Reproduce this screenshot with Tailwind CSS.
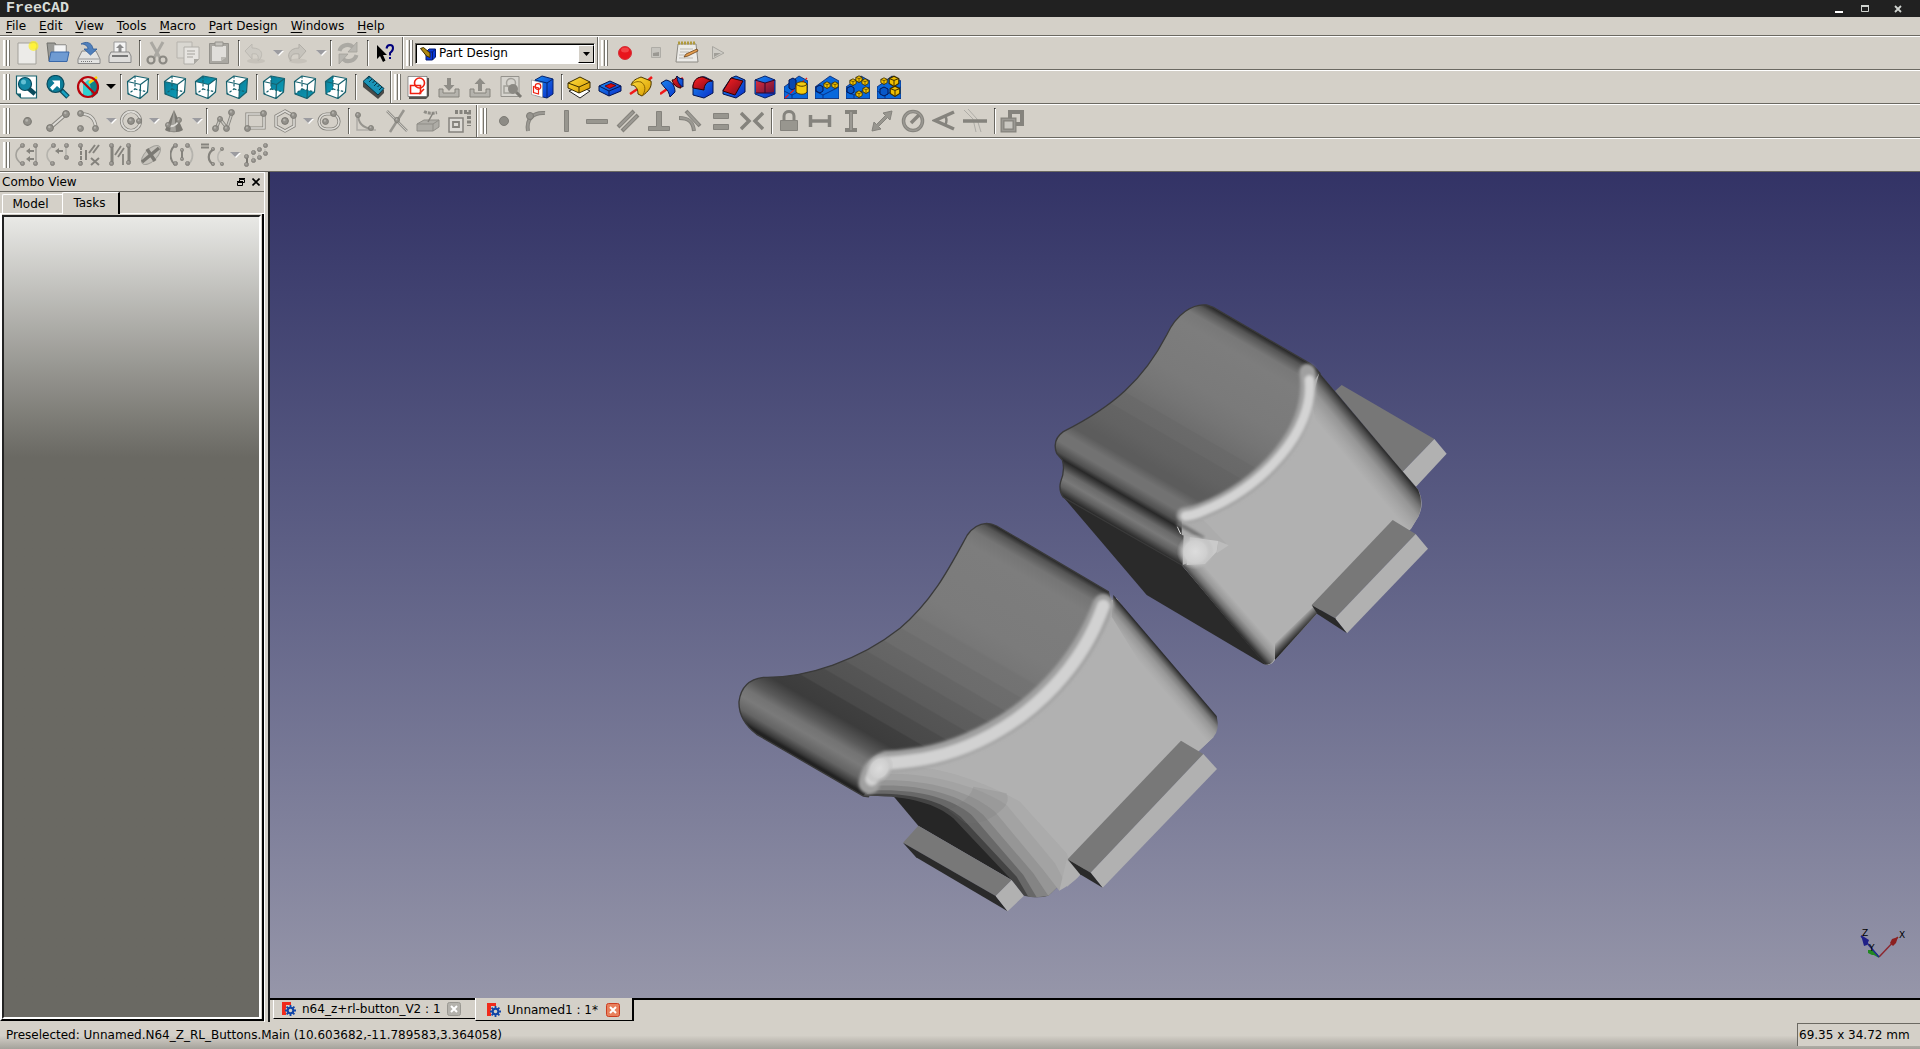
<!DOCTYPE html>
<html lang="en">
<head>
<meta charset="utf-8">
<title>FreeCAD</title>
<script src="https://cdn.jsdelivr.net/npm/@tailwindcss/browser@4"></script>
</head>
<body class="flex h-screen flex-col overflow-hidden bg-[#d4d0c8] font-['DejaVu_Sans',sans-serif] text-xs text-black">

<!-- shared icon parts -->
<svg class="absolute size-0" aria-hidden="true">
  <defs>
    <linearGradient id="teal" x1="0" y1="0" x2="1" y2="1"><stop offset="0" stop-color="#0a7d98"/><stop offset="1" stop-color="#0b9cb8"/></linearGradient>
    <linearGradient id="red" x1="0" y1="0" x2="1" y2="1"><stop offset="0" stop-color="#ff2020"/><stop offset="1" stop-color="#7c0a1c"/></linearGradient>
    <linearGradient id="blue" x1="0" y1="0" x2="1" y2="1"><stop offset="0" stop-color="#1a8cf0"/><stop offset="1" stop-color="#0a2cc8"/></linearGradient>
    <linearGradient id="gold" x1="0" y1="0" x2="1" y2="1"><stop offset="0" stop-color="#ffe040"/><stop offset="1" stop-color="#d89a00"/></linearGradient>
    <symbol id="cube-back" viewBox="0 0 24 24"><path d="M1.5 6.5L9 1l13.500 2.500L21.500 17 14 23.500 2 19z" fill="#fff"/></symbol>
    <symbol id="cube-wire" viewBox="0 0 24 24"><g fill="none" stroke="#17626f" stroke-width="1.200" stroke-linejoin="round"><path d="M1.500 6.500L9 1l13.500 2.500L21.500 17 14 23.500 2 19zM1.500 6.500L14.500 9.500l8-6M14.500 9.500L14 23.500"/><path d="M9 1v13L2 19M9 14l12.500 3" stroke-dasharray="2.500 1.500"/></g></symbol>
    <symbol id="arrow" viewBox="0 0 11 6"><path d="M1 1h10L6 6z" fill="#fff"/><path d="M0 0h10L5 5z" fill="#9c9ca0"/></symbol>
    <symbol id="dot" viewBox="0 0 8 8"><circle cx="4" cy="4" r="3.400" fill="#93918b" stroke="#7b7973"/><circle cx="3.300" cy="3" r="1.200" fill="#b5b3ad"/></symbol>
    <symbol id="gold-cube" viewBox="0 0 10 10"><path d="M1 3l4-2 4 2v4L5 9.500 1 7z" fill="#f0c000" stroke="#3a2c00"/><path d="M1 3l4 1.500L9 3M5 4.500v5" fill="none" stroke="#3a2c00" stroke-width=".8"/></symbol>
    <symbol id="blue-base" viewBox="0 0 24 24"><path d="M0 12L15 1l9 5v17.500H0z" fill="#0868dc" stroke="#06226a" stroke-width=".8"/><path d="M0 16l8 4 16-8M8 20v3.500" fill="none" stroke="#06328a"/></symbol>
    <symbol id="fc" viewBox="0 0 14 14"><path d="M0 0h9v3H4v2h3v3H4v5H0z" fill="#f02a1c"/><circle cx="8.500" cy="8.500" r="5" fill="#d4d0c8"/><circle cx="8.500" cy="8.500" r="2.800" fill="none" stroke="#1246a8" stroke-width="2"/><path d="M8.500 3v3M8.500 11v3M3 8.500h3M11 8.500h3M4.600 4.600l2 2M10.400 10.400l2 2M12.400 4.600l-2 2M6.600 10.400l-2 2" stroke="#1246a8" stroke-width="1.800"/></symbol>
  </defs>
</svg>

<header class="flex h-[17px] shrink-0 items-center justify-between bg-[#212121] pr-[18px] pl-1.5">
  <h1 class="font-['Liberation_Mono',monospace] text-[15px] leading-[17px] font-bold text-[#d8dcd8]">FreeCAD</h1>
  <div class="flex items-center gap-4">
    <button aria-label="Minimize"><svg class="h-2 w-2.5" viewBox="0 0 10 8"><path d="M1 6h8v2H1z" fill="#fff"/></svg></button>
    <button aria-label="Maximize"><svg class="h-2 w-2.5" viewBox="0 0 10 8"><path d="M1.500 1.500h7v5h-7z" fill="none" stroke="#d0d4d0" /><path d="M1 0h8v2H1z" fill="#d0d4d0"/></svg></button>
    <button aria-label="Close" class="ml-2"><svg class="size-2" viewBox="0 0 8 8"><path d="M1 1l6 6M7 1L1 7" stroke="#d0d4d0" stroke-width="1.800"/></svg></button>
  </div>
</header>

<nav class="flex h-[19px] shrink-0 items-center gap-[13px] border-b border-[#6b6962] px-1.5 leading-[18px]" aria-label="Menu bar">
  <button><u class="underline-offset-2">F</u>ile</button>
  <button><u class="underline-offset-2">E</u>dit</button>
  <button><u class="underline-offset-2">V</u>iew</button>
  <button><u class="underline-offset-2">T</u>ools</button>
  <button><u class="underline-offset-2">M</u>acro</button>
  <button><u class="underline-offset-2">P</u>art Design</button>
  <button><u class="underline-offset-2">W</u>indows</button>
  <button><u class="underline-offset-2">H</u>elp</button>
</nav>

<!-- row 1: file, workbench, macro -->
<div class="flex h-[34px] shrink-0 border-y border-t-white border-b-[#6b6962] [&_svg]:shrink-0 [&>div>button]:w-[31px] [&>div>button]:pl-[3px] [&>div>hr]:mr-px [&>div>hr]:ml-[3px] [&>div>hr]:h-[26px] [&>div>hr]:w-0.5 [&>div>hr]:border-x [&>div>hr]:border-l-[#6b6962] [&>div>hr]:border-r-white">
  <div class="flex items-center border-r border-[#6b6962] pr-px" role="toolbar" aria-label="File">
    <span class="mr-[3px] ml-[3px] h-[26px] w-1.5 border-x-2 border-l-white border-r-white shadow-[inset_-1px_0_#77756e,1px_0_#77756e]"></span>
    <button aria-label="New"><svg class="size-6" viewBox="0 0 24 24"><path d="M3 2h18v21H3z" fill="#ecebe8" stroke="#a3a19b"/><circle cx="18.500" cy="5" r="5" fill="#fff200" opacity=".6"/><circle cx="18.500" cy="5" r="3" fill="#fff33a"/></svg></button>
    <button aria-label="Open"><svg class="size-6" viewBox="0 0 24 24"><path d="M1 2h8l1 2h10v16H3z" fill="#9a9a96" stroke="#6f6f6b"/><path d="M8 4h12v8H8z" fill="#f4f4f4" stroke="#999" stroke-width=".6"/><path d="M5 11h18l-2 9.500H3z" fill="#6f9bd2" stroke="#3a68a8"/></svg></button>
    <button aria-label="Save"><svg class="size-6" viewBox="0 0 24 24"><path d="M5 10h14l4 8v4.500H1V18z" fill="#e4e4e2" stroke="#888"/><path d="M1.500 18h21" stroke="#999"/><path d="M4 20.500h12" stroke="#777" stroke-dasharray="1 1"/><path d="M4 3C9 0 15 1 16 8h4l-6.500 6L7 8h4C11 5 8 3 4 3z" fill="#5080bc" stroke="#2c5a98" stroke-width=".8"/></svg></button>
    <button aria-label="Print"><svg class="size-6" viewBox="0 0 24 24"><path d="M6 1h12v12H6z" fill="#f4f4f4" stroke="#999"/><path d="M12 3l4 4h-2.500v4h-3V7H8z" fill="#8a8a8a"/><path d="M3 11h18l2 4v6.500H1V15z" fill="#dedddb" stroke="#888"/><path d="M4 14h16v2H4z" fill="#777"/></svg></button>
    <hr>
    <button aria-label="Cut"><svg class="size-6" viewBox="0 0 24 24"><path d="M6 1l9 16M18 1L9 17" stroke="#aaa8a2" stroke-width="3"/><circle cx="6" cy="19" r="3.500" fill="none" stroke="#8b8983" stroke-width="2.200"/><circle cx="18" cy="19" r="3.500" fill="none" stroke="#8b8983" stroke-width="2.200"/></svg></button>
    <button aria-label="Copy"><svg class="size-6" viewBox="0 0 24 24"><path d="M1 1h15v16H1z" fill="#d9d7d1" stroke="#b6b3ad"/><path d="M8 6h15v12l-5 5H8z" fill="#e6e4e0" stroke="#b0aea8"/><path d="M11 10h8M11 13h8M11 16h6" stroke="#bab8b2" stroke-width="1.500"/><path d="M23 18h-5v5z" fill="#aaa8a2"/></svg></button>
    <button aria-label="Paste"><svg class="size-6" viewBox="0 0 24 24"><path d="M2.500 2.500h19v20h-19z" fill="#a9a7a1" stroke="#94928c"/><path d="M5 5h14v11l-5 4H5z" fill="#e0deda"/><path d="M19 16h-5v4z" fill="#bab8b2"/><path d="M8 1h8v4H8z" fill="#c4c2bc" stroke="#94928c"/></svg></button>
    <hr>
    <div class="flex w-[43px] items-center pl-0.5"><button aria-label="Undo"><svg class="size-6" viewBox="0 0 24 24"><ellipse cx="13" cy="20" rx="9" ry="2.500" fill="#c6c2ba"/><path d="M9 3v4c11 0 12 8 6 13 1-6-1-8-6-7v5L2 10z" fill="#cdcac3" stroke="#bcb9b2"/></svg></button><button class="ml-1.5" aria-label="Undo list"><svg class="h-1.5 w-[11px]"><use href="#arrow"/></svg></button></div>
    <div class="flex w-[43px] items-center pl-0.5"><button aria-label="Redo"><svg class="size-6" viewBox="0 0 24 24"><ellipse cx="12" cy="20" rx="9" ry="2.500" fill="#c6c2ba"/><path d="M13 3v4C3 7 0 15 5 20c-1-6 2-8 8-7v5l7-8z" fill="#c6c3bc" stroke="#b2afa8"/></svg></button><button class="ml-1.5" aria-label="Redo list"><svg class="h-1.5 w-[11px]"><use href="#arrow"/></svg></button></div>
    <hr>
    <button aria-label="Refresh"><svg class="size-6" viewBox="0 0 24 24"><path d="M3.500 10C5 4 13 2 17 6M20.500 14c-1.500 6-9.500 8-13.500 4" fill="none" stroke="#aba9a3" stroke-width="4"/><path d="M21 1v10h-9zM3 23V13h9z" fill="#b8b6b0" stroke="#a3a19b" stroke-width=".8"/></svg></button>
    <hr>
    <button aria-label="What's This?"><svg class="size-6" viewBox="0 0 24 24"><path d="M4 4v14l3-3 3 6 2.500-1.500L10 14h4z" fill="#000"/><path d="M13.500 7.500Q14 4 17 4t3 3-3 5v2.500" fill="none" stroke="#00007c" stroke-width="2"/><path d="M16 16h2v2h-2z" fill="#00007c"/></svg></button>
  </div>
  <div class="flex items-center border-x border-l-white border-r-[#6b6962] pr-0.5" role="toolbar" aria-label="Workbench">
    <span class="mr-[3px] ml-0.5 h-[26px] w-1.5 border-x-2 border-l-white border-r-white shadow-[inset_-1px_0_#77756e,1px_0_#77756e]"></span>
    <div class="relative h-[21px] w-[180px] border border-[#6b6962] border-r-white border-b-white bg-white">
      <select aria-label="Workbench" class="block size-full appearance-none border-t border-l border-black pl-[22px] leading-[17px]"><option>Part Design</option></select>
      <svg class="pointer-events-none absolute top-[3px] left-1 h-3.5 w-4" viewBox="0 0 16 14"><path d="M6 5l3-3h6.500v8l-3 3H6z" fill="#0838d8" stroke="#041a70"/><path d="M6 5h6.500v8M12.500 5l3-3" fill="none" stroke="#041a70"/><path d="M.5 1.500l3-1L10 6v4.500L6.500 9z" fill="#b08a10" stroke="#3c2e00"/></svg>
      <span class="pointer-events-none absolute top-px right-0 flex h-[18px] w-4 items-center justify-center border border-white border-r-black border-b-black bg-[#d4d0c8]"><svg class="h-1 w-[7px]" viewBox="0 0 7 4"><path d="M0 0h7L3.500 4z"/></svg></span>
    </div>
  </div>
  <div class="flex flex-1 items-center border-l border-white" role="toolbar" aria-label="Macro">
    <span class="mr-[3px] ml-0.5 h-[26px] w-1.5 border-x-2 border-l-white border-r-white shadow-[inset_-1px_0_#77756e,1px_0_#77756e]"></span>
    <button aria-label="Record macro"><svg class="size-6" viewBox="0 0 24 24"><circle cx="12" cy="12" r="6.500" fill="#e8141c" stroke="#d43038"/><ellipse cx="12" cy="9" rx="4" ry="2.500" fill="#f86060" opacity=".6"/></svg></button>
    <button aria-label="Stop macro"><svg class="size-6" viewBox="0 0 24 24"><path d="M7.500 6.500h9v10h-9z" fill="#c6c4be" stroke="#aeaca6"/><path d="M9 12l6-1v4H9z" fill="#9a9892"/></svg></button>
    <button aria-label="Edit macros"><svg class="size-6" viewBox="0 0 24 24"><path d="M3 3h18l2 18H1z" fill="#ecebe8" stroke="#8c8a84"/><path d="M3 2h18" stroke="#b09a3c" stroke-width="3" stroke-dasharray="2 1"/><path d="M5 8h13M5 11h9M4 14h6M4 17h14" stroke="#bbb9b3"/><path d="M9 16l2-3 11-5 1 2-10 5z" fill="#e8a050" stroke="#6a4018" stroke-width=".8"/></svg></button>
    <button aria-label="Execute macro"><svg class="size-6" viewBox="0 0 24 24"><path d="M6.500 5.500v12.500L18 12z" fill="#cfcdc7" stroke="#a8a6a0"/><path d="M8 12h7l-7 4z" fill="#a19f99"/></svg></button>
  </div>
</div>

<!-- row 2: view, part design -->
<div class="flex h-[34px] shrink-0 border-y border-t-white border-b-[#6b6962] [&_svg]:shrink-0 [&>div>button]:w-[31px] [&>div>button]:pl-[3px] [&>div>hr]:mr-px [&>div>hr]:ml-[3px] [&>div>hr]:h-[26px] [&>div>hr]:w-0.5 [&>div>hr]:border-x [&>div>hr]:border-l-[#6b6962] [&>div>hr]:border-r-white">
  <div class="flex items-center border-r border-[#6b6962] pr-px" role="toolbar" aria-label="View">
    <span class="mr-[3px] ml-[3px] h-[26px] w-1.5 border-x-2 border-l-white border-r-white shadow-[inset_-1px_0_#77756e,1px_0_#77756e]"></span>
    <button aria-label="Fit all"><svg class="size-6" viewBox="0 0 24 24"><path d="M1.500 1h20v22H6l-4.500-4.500z" fill="#fff" stroke="#17626f" stroke-width="1.200"/><path d="M1.500 18.500H6V23z" fill="#17626f"/><path d="M13 13l7 6" stroke="#0a4a5c" stroke-width="4.500"/><circle cx="10" cy="9" r="6.500" fill="#1389a6" stroke="#0a4a5c" stroke-width="1.200"/><circle cx="8.500" cy="7" r="2.500" fill="#63c0d4"/></svg></button>
    <button aria-label="Fit selection"><svg class="size-6" viewBox="0 0 24 24"><path d="M14 14l8 8" stroke="#0a4a5c" stroke-width="5"/><path d="M16 16l5.500 5.500" stroke="#18a0c0" stroke-width="2.500"/><circle cx="9.500" cy="9" r="8.500" fill="#0c7d99" stroke="#0a4a5c" stroke-width="1.200"/><path d="M4 12.500l4.500-4.500L6 5.500h8v8L11 11l-4.500 4.500z" fill="#fff"/></svg></button>
    <div class="flex w-[43px] items-center pl-0.5"><button aria-label="Draw style"><svg class="size-6" viewBox="0 0 24 24"><path d="M7 9l5-4 7 2v12l-5 3-7-2z" fill="#30d0d0"/><path d="M14 9l7-5 1 14-6 5z" fill="#108088"/><path d="M13 8l8-6" stroke="#ffd400" stroke-width="2.500"/><circle cx="12" cy="12" r="10" fill="none" stroke="#b8040c" stroke-width="2.200"/><path d="M5 5l14 14" stroke="#b8040c" stroke-width="2.200"/></svg></button><button class="ml-1.5" aria-label="Draw style list"><svg class="h-1.5 w-[11px]" viewBox="0 0 11 6"><path d="M0 0h10L5 5z"/></svg></button></div>
    <hr>
    <button aria-label="Axonometric"><svg class="size-6" viewBox="0 0 24 24"><use href="#cube-back"/><use href="#cube-wire"/></svg></button>
    <hr>
    <button aria-label="Front"><svg class="size-6" viewBox="0 0 24 24"><use href="#cube-back"/><path d="M1.500 6.500l13 3-.5 14-12-4.500z" fill="url(#teal)"/><use href="#cube-wire"/></svg></button>
    <button aria-label="Top"><svg class="size-6" viewBox="0 0 24 24"><use href="#cube-back"/><path d="M1.500 6.500L9 1l13.500 2.500-8 6z" fill="url(#teal)"/><use href="#cube-wire"/></svg></button>
    <button aria-label="Right"><svg class="size-6" viewBox="0 0 24 24"><use href="#cube-back"/><path d="M14.500 9.500l8-6-1 13.500-7.500 6.500z" fill="url(#teal)"/><use href="#cube-wire"/></svg></button>
    <hr>
    <button aria-label="Rear"><svg class="size-6" viewBox="0 0 24 24"><use href="#cube-back"/><path d="M9 1l13.500 2.500-1 13.500L9 14z" fill="url(#teal)"/><use href="#cube-wire"/></svg></button>
    <button aria-label="Bottom"><svg class="size-6" viewBox="0 0 24 24"><use href="#cube-back"/><path d="M2 19l7-5 12.500 3-7.500 6.500z" fill="url(#teal)"/><use href="#cube-wire"/></svg></button>
    <button aria-label="Left"><svg class="size-6" viewBox="0 0 24 24"><use href="#cube-back"/><path d="M1.500 6.500L9 1v13l-7 5z" fill="url(#teal)"/><use href="#cube-wire"/></svg></button>
    <hr>
    <button aria-label="Measure distance"><svg class="size-6" viewBox="0 0 24 24"><path d="M2 7v5l15 12 6-6v-3z" fill="#4a4a48"/><path d="M2 6.500L8 1l15 12.500-6 6.500z" fill="#1a94b8" stroke="#063848"/><path d="M8.500 2l-2 2M11 4l-3 3M13.500 6l-2 2M16 8l-3 3M18.500 10l-2 2M21 12l-3 3" stroke="#053444"/></svg></button>
  </div>
  <div class="flex flex-1 items-center border-l border-white" role="toolbar" aria-label="Part Design">
    <span class="mr-[3px] ml-0.5 h-[26px] w-1.5 border-x-2 border-l-white border-r-white shadow-[inset_-1px_0_#77756e,1px_0_#77756e]"></span>
    <button aria-label="Create sketch"><svg class="size-6" viewBox="0 0 24 24"><path d="M3 3h20v18l-3 3H3z" fill="#55534e"/><path d="M2 1.500h19v20H2z" fill="#fff" stroke="#555" stroke-width=".6"/><g fill="none" stroke="#f02010" stroke-width="1.600"><path d="M4.500 10.500h10v8h-10z"/><circle cx="13.500" cy="8" r="5"/><path d="M13 19l5-5"/></g></svg></button>
    <button aria-label="Leave sketch"><svg class="size-6" viewBox="0 0 24 24"><path d="M2 14v8h20v-8h-4v4H6v-4z" fill="#b5b3ad" stroke="#85837d"/><path d="M10 3h4v7h3.500L12 16l-5.500-6H10z" fill="#8f8d87"/></svg></button>
    <button aria-label="Map sketch"><svg class="size-6" viewBox="0 0 24 24"><path d="M2 14v8h20v-8h-4v4H6v-4z" fill="#b5b3ad" stroke="#85837d"/><path d="M10 16h4V9h3.500L12 3 6.500 9H10z" fill="#8f8d87"/></svg></button>
    <button aria-label="View sketch"><svg class="size-6" viewBox="0 0 24 24"><path d="M2 1.500h18v20H2z" fill="#d6d4ce" stroke="#94928c"/><g fill="none" stroke="#a3a19b" stroke-width="1.500"><path d="M5 11h9v7H5z"/><circle cx="12" cy="8" r="4.500"/></g><path d="M17 17l5 5" stroke="#7c7a74" stroke-width="3"/><circle cx="14" cy="14" r="5" fill="#8b8983"/></svg></button>
    <button aria-label="Sketch on face"><svg class="size-6" viewBox="0 0 24 24"><path d="M5 5l7-4 11 3v15l-6 4-12-3z" fill="url(#blue)" stroke="#06226a"/><path d="M5 5l12 3 6-4M17 8v15" fill="none" stroke="#06226a"/><path d="M1.500 5l11 3v14.500l-11-3z" fill="#fff" stroke="#888" stroke-width=".6"/><g fill="none" stroke="#f02010" stroke-width="1.200"><path d="M3.500 11.500l5 1.500v6l-5-1.500z"/><circle cx="8" cy="11.500" r="2.800"/></g></svg></button>
    <hr>
    <button aria-label="Pad"><svg class="size-6" viewBox="0 0 24 24"><path d="M2 16l11-5 10 5-10 7z" fill="#fff" stroke="#222"/><path d="M1 8l12-6 10 5v6l-11 5L1 13z" fill="url(#gold)" stroke="#3a2c00"/><path d="M1 8l11 4 11-5M12 12v6" fill="none" stroke="#3a2c00"/></svg></button>
    <button aria-label="Pocket"><svg class="size-6" viewBox="0 0 24 24"><path d="M1 11l11-5 11 5v5l-12 5L1 16z" fill="url(#blue)" stroke="#041450"/><path d="M1 11l10 5 12-5M11 16v5" fill="none" stroke="#041450"/><path d="M7 11l6-2.500 5 2-6.500 3z" fill="#d80c14" stroke="#50040c" stroke-width=".8"/></svg></button>
    <button aria-label="Revolution"><svg class="size-6" viewBox="0 0 24 24"><path d="M1 19l9-6M16 8l7-6" stroke="#f01818" stroke-width="2.500"/><path d="M2 10C4 5 7 4 12 2l10 4c1 6-2 10-9 15l-4-2c0-6-3-9-7-9z" fill="url(#gold)" stroke="#4a3600"/><path d="M12 7c5 3 5 9 1 14M2 10c3-3 6-4 10-3" fill="none" stroke="#8a6400"/></svg></button>
    <button aria-label="Groove"><svg class="size-6" viewBox="0 0 24 24"><path d="M0 19L23 3" stroke="#f01818" stroke-width="2.500"/><path d="M12 5c2 6 6 8 9 8l1-9c-3 0-4-2-5-3-1 3-3 4-5 4z" fill="url(#red)" stroke="#300"/><path d="M17 1c0 5 2 9 6 11V4c-3 0-4-1-6-3zM1 8l5-3c6 1 9 6 9 12l-5 5c-1-4-2-7-5-9z" fill="url(#blue)" stroke="#041450"/></svg></button>
    <button aria-label="Fillet"><svg class="size-6" viewBox="0 0 24 24"><path d="M2 11C3 4 9 1 14 2l8 4v12l-9 5-11-3z" fill="url(#blue)" stroke="#041450"/><path d="M2 11C3 4 7 2 12 2l9 4c-5 0-8 4-8 9L2 13z" fill="url(#red)" stroke="#300"/></svg></button>
    <button aria-label="Chamfer"><svg class="size-6" viewBox="0 0 24 24"><path d="M1 15L9 3l5-2 9 4v12l-9 6-13-4z" fill="url(#blue)" stroke="#041450"/><path d="M1 16L9 3l12 3-8 14z" fill="url(#red)" stroke="#300"/></svg></button>
    <button aria-label="Draft"><svg class="size-6" viewBox="0 0 24 24"><path d="M2 5l10-4 10 4v14l-10 4-10-4z" fill="url(#blue)" stroke="#06226a"/><path d="M3 6l9 2 9-3v12l-9 1-9 0z" fill="url(#red)" opacity=".85"/><path d="M2 5l10 3 10-3M12 8v10M3 18h18" fill="none" stroke="#31062a"/></svg></button>
    <button aria-label="Mirrored"><svg class="size-6" viewBox="0 0 24 24"><use href="#blue-base"/><path d="M5 5l4-2 3 2v8l-4 2-3-2z" fill="#0848b0" stroke="#041450"/><path d="M1 23L23 3" stroke="#f01818" stroke-width="1.300" stroke-dasharray="5 2"/><path d="M12 9v8c3 3 9 3 11 0V9c-2-3-8-3-11 0z" fill="#f4cc10" stroke="#4a3600"/><path d="M12 9c3 3 9 3 11 0" fill="none" stroke="#4a3600"/></svg></button>
    <button aria-label="Linear pattern"><svg class="size-6" viewBox="0 0 24 24"><use href="#blue-base"/><path d="M1 12l4-2 3 2v4l-3 2-4-2z" fill="#0858c8" stroke="#041450"/><use href="#gold-cube" x="8" y="6" width="8" height="8"/><use href="#gold-cube" x="16" y="6" width="8" height="8"/></svg></button>
    <button aria-label="Polar pattern"><svg class="size-6" viewBox="0 0 24 24"><use href="#blue-base"/><path d="M1 13l4-2 3 2v4l-3 2-4-2z" fill="#0858c8" stroke="#041450"/><use href="#gold-cube" x="3" y="3" width="8" height="8"/><use href="#gold-cube" x="9" y="0" width="8" height="8"/><use href="#gold-cube" x="15" y="3" width="8" height="8"/><use href="#gold-cube" x="16" y="11" width="8" height="8"/><use href="#gold-cube" x="9" y="15" width="8" height="8"/></svg></button>
    <button aria-label="MultiTransform"><svg class="size-6" viewBox="0 0 24 24"><use href="#blue-base"/><path d="M3 14l4-2 4 2v5l-4 2-4-2z" fill="#0858c8" stroke="#041450"/><use href="#gold-cube" x="3" y="2" width="8" height="8"/><use href="#gold-cube" x="10" y="0" width="14" height="12"/><use href="#gold-cube" x="12" y="10" width="12" height="12"/></svg></button>
  </div>
</div>

<!-- row 3: sketcher geometry, constraints -->
<div class="flex h-[34px] shrink-0 border-y border-t-white border-b-[#6b6962] [&_svg]:shrink-0 [&>div>button]:w-[31px] [&>div>button]:pl-[3px] [&>div>hr]:mr-px [&>div>hr]:ml-[3px] [&>div>hr]:h-[26px] [&>div>hr]:w-0.5 [&>div>hr]:border-x [&>div>hr]:border-l-[#6b6962] [&>div>hr]:border-r-white">
  <div class="flex items-center border-r border-[#6b6962] pr-px" role="toolbar" aria-label="Sketcher geometries">
    <span class="mr-[3px] ml-[3px] h-[26px] w-1.5 border-x-2 border-l-white border-r-white shadow-[inset_-1px_0_#77756e,1px_0_#77756e]"></span>
    <button aria-label="Point"><svg class="size-6" viewBox="0 0 24 24"><use href="#dot" x="8" y="8" width="9" height="9"/></svg></button>
    <button aria-label="Line"><svg class="size-6" viewBox="0 0 24 24"><path d="M4 19L20 5" stroke="#85837d" stroke-width="4"/><path d="M4 19L20 5" stroke="#dddbd6" stroke-width="2"/><use href="#dot" x="0" y="15" width="8" height="8"/><use href="#dot" x="16" y="1" width="8" height="8"/></svg></button>
    <div class="flex w-[43px] items-center pl-0.5"><button aria-label="Arc"><svg class="size-6" viewBox="0 0 24 24"><path d="M6 5c8 0 13 5 14 14" fill="none" stroke="#85837d" stroke-width="3.500"/><path d="M6 5c8 0 13 5 14 14" fill="none" stroke="#dddbd6" stroke-width="2"/><use href="#dot" x="1" y="1" width="7" height="7"/><use href="#dot" x="1" y="16" width="7" height="7"/><use href="#dot" x="16" y="16" width="7" height="7"/></svg></button><button class="ml-1.5" aria-label="Arc list"><svg class="h-1.5 w-[11px]"><use href="#arrow"/></svg></button></div>
    <div class="flex w-[43px] items-center pl-0.5"><button aria-label="Circle"><svg class="size-6" viewBox="0 0 24 24"><circle cx="12" cy="12" r="9.500" fill="none" stroke="#85837d" stroke-width="3.200"/><circle cx="12" cy="12" r="9.500" fill="none" stroke="#dddbd6" stroke-width="1.800"/><use href="#dot" x="8" y="8" width="8" height="8"/><use href="#dot" x="17" y="9" width="6" height="6"/></svg></button><button class="ml-1.5" aria-label="Circle list"><svg class="h-1.5 w-[11px]"><use href="#arrow"/></svg></button></div>
    <div class="flex w-[43px] items-center pl-0.5"><button aria-label="Conic"><svg class="size-6" viewBox="0 0 24 24"><path d="M12 1l9 20c-4 3-14 3-18 0z" fill="#7b7973"/><path d="M12 1l2 21.500H8z" fill="#a5a39d"/><path d="M6 17c5 1 9-1 11-6" fill="none" stroke="#dddbd6" stroke-width="1.800"/><use href="#dot" x="3" y="13" width="6" height="6"/><use href="#dot" x="14" y="8" width="6" height="6"/></svg></button><button class="ml-1.5" aria-label="Conic list"><svg class="h-1.5 w-[11px]"><use href="#arrow"/></svg></button></div>
    <hr>
    <button aria-label="Polyline"><svg class="size-6" viewBox="0 0 24 24"><path d="M4 20L8 10l7 9 5-15" fill="none" stroke="#85837d" stroke-width="3.200"/><path d="M4 20L8 10l7 9 5-15" fill="none" stroke="#c9c7c1" stroke-width="1.500"/><use href="#dot" x="0" y="16" width="7" height="7"/><use href="#dot" x="5" y="7" width="6" height="6"/><use href="#dot" x="11" y="16" width="7" height="7"/><use href="#dot" x="16" y="0" width="7" height="7"/></svg></button>
    <button aria-label="Rectangle"><svg class="size-6" viewBox="0 0 24 24"><path d="M4 5h17v14H4z" fill="none" stroke="#85837d" stroke-width="3.200"/><path d="M4 5h17v14H4z" fill="none" stroke="#dddbd6" stroke-width="1.600"/><use href="#dot" x="1" y="16" width="7" height="7"/><use href="#dot" x="17" y="1" width="7" height="7"/></svg></button>
    <div class="flex w-[43px] items-center pl-0.5"><button aria-label="Polygon"><svg class="size-6" viewBox="0 0 24 24"><path d="M12 2l9 5v10l-9 5-9-5V7z" fill="none" stroke="#85837d" stroke-width="3.200"/><path d="M12 2l9 5v10l-9 5-9-5V7z" fill="none" stroke="#dddbd6" stroke-width="1.600"/><use href="#dot" x="8" y="8" width="8" height="8"/><use href="#dot" x="17" y="3" width="7" height="7"/></svg></button><button class="ml-1.5" aria-label="Polygon list"><svg class="h-1.5 w-[11px]"><use href="#arrow"/></svg></button></div>
    <button aria-label="Slot"><svg class="size-6" viewBox="0 0 24 24"><rect x="2" y="5" width="20" height="15" rx="7.500" fill="none" stroke="#85837d" stroke-width="3.200"/><rect x="2" y="5" width="20" height="15" rx="7.500" fill="none" stroke="#dddbd6" stroke-width="1.600"/><use href="#dot" x="5" y="9" width="7" height="7"/><use href="#dot" x="13" y="1" width="7" height="7"/></svg></button>
    <hr>
    <button aria-label="Sketch fillet"><svg class="size-6" viewBox="0 0 24 24"><path d="M3 3v18h19" fill="none" stroke="#aeaca6" stroke-width="1.500"/><path d="M4 5c0 9 5 14 14 15" fill="none" stroke="#97958f" stroke-width="2"/><use href="#dot" x="1" y="3" width="6" height="6"/><use href="#dot" x="14" y="16" width="6" height="6"/></svg></button>
    <button aria-label="Trim edge"><svg class="size-6" viewBox="0 0 24 24"><path d="M2 2l20 20M19 1L5 23" stroke="#97958f" stroke-width="2.500"/><path d="M2 2l20 20" stroke="#c9c7c1"/><use href="#dot" x="9" y="8" width="6" height="6"/></svg></button>
    <button aria-label="External geometry"><svg class="size-6" viewBox="0 0 24 24"><path d="M1 15l7-4h15v7l-6 4H1z" fill="#aeaca6" stroke="#8f8d87"/><path d="M1 15h16l6-4M17 15v7" fill="none" stroke="#8f8d87"/><path d="M8 2.500c4 2 8 2 13 1" fill="none" stroke="#8f8d87" stroke-width="3" stroke-dasharray="3 1"/><path d="M12 13l5-9" stroke="#85837d" stroke-width="1.500"/></svg></button>
    <button aria-label="Construction mode"><svg class="size-6" viewBox="0 0 24 24"><path d="M8 3h14v14" fill="none" stroke="#85837d" stroke-width="4" stroke-dasharray="3 1.500"/><path d="M2 9h14v14H2z" fill="#dddbd6" stroke="#85837d" stroke-width="1.500"/><path d="M6 13h6v5H6z" fill="none" stroke="#85837d" stroke-width="1.800"/></svg></button>
  </div>
  <div class="flex flex-1 items-center border-l border-white" role="toolbar" aria-label="Sketcher constraints">
    <span class="mr-[3px] ml-0.5 h-[26px] w-1.5 border-x-2 border-l-white border-r-white shadow-[inset_-1px_0_#77756e,1px_0_#77756e]"></span>
    <button aria-label="Coincident"><svg class="size-6" viewBox="0 0 24 24"><circle cx="12" cy="12" r="4.500" fill="#8d8b85" stroke="#7d7b75"/></svg></button>
    <button aria-label="Point on object"><svg class="size-6" viewBox="0 0 24 24"><path d="M5 22C3 10 10 3 22 4" fill="none" stroke="#85837d" stroke-width="4"/><path d="M5 22C3 10 10 3 22 4" fill="none" stroke="#9b9993" stroke-width="2"/><circle cx="7" cy="7" r="3.500" fill="#96948e" stroke="#7d7b75"/></svg></button>
    <button aria-label="Vertical"><svg class="size-6" viewBox="0 0 24 24"><path d="M10.500 1.500h4v21h-4z" fill="#98968f" stroke="#85837d"/></svg></button>
    <button aria-label="Horizontal"><svg class="size-6" viewBox="0 0 24 24"><path d="M1.500 10.500h21v4h-21z" fill="#98968f" stroke="#85837d"/></svg></button>
    <button aria-label="Parallel"><svg class="size-6" viewBox="0 0 24 24"><path d="M2 18L18 2M6 22L22 6" stroke="#85837d" stroke-width="4"/><path d="M3 17L17 3M7 21L21 7" stroke="#9b9993" stroke-width="2"/></svg></button>
    <button aria-label="Perpendicular"><svg class="size-6" viewBox="0 0 24 24"><path d="M9.500 2.500h5v15h8v4h-21v-4h8z" fill="#98968f" stroke="#85837d"/></svg></button>
    <button aria-label="Tangent"><svg class="size-6" viewBox="0 0 24 24"><path d="M8 2l14 15M1 9c9 0 14 3 15 13" fill="none" stroke="#85837d" stroke-width="4"/><path d="M9 3l12 13M2 9c8 0 13 3 14 12" fill="none" stroke="#9b9993" stroke-width="2"/></svg></button>
    <button aria-label="Equal"><svg class="size-6" viewBox="0 0 24 24"><path d="M4.500 4.500h15v5h-15zM4.500 15.500h15v5h-15z" fill="#98968f" stroke="#85837d"/></svg></button>
    <button aria-label="Symmetric"><svg class="size-6" viewBox="0 0 24 24"><path d="M1 4l8 8-8 8M23 4l-8 8 8 8" fill="none" stroke="#85837d" stroke-width="3.500"/></svg></button>
    <hr>
    <button aria-label="Lock"><svg class="size-6" viewBox="0 0 24 24"><path d="M7 12V7c0-6 10-6 10 0v5" fill="none" stroke="#85837d" stroke-width="3"/><path d="M3.500 11.500h17v10h-17z" fill="#98968f" stroke="#85837d"/></svg></button>
    <button aria-label="Horizontal distance"><svg class="size-6" viewBox="0 0 24 24"><path d="M2.500 6v12M21.500 6v12M2 12h20" stroke="#85837d" stroke-width="3.500"/></svg></button>
    <button aria-label="Vertical distance"><svg class="size-6" viewBox="0 0 24 24"><path d="M6 3h12M6 21h12M12 3v18" stroke="#85837d" stroke-width="4"/><path d="M12 3v18" stroke="#9b9993" stroke-width="2"/></svg></button>
    <button aria-label="Length"><svg class="size-6" viewBox="0 0 24 24"><path d="M22 2l-2 9-2.500-2.500-9 9L11 20l-9 2 2-9 2.500 2.500 9-9L13 4z" fill="#98968f" stroke="#85837d"/></svg></button>
    <button aria-label="Radius"><svg class="size-6" viewBox="0 0 24 24"><circle cx="12" cy="12" r="9.500" fill="none" stroke="#85837d" stroke-width="3.500"/><circle cx="12" cy="12" r="9.500" fill="none" stroke="#9b9993" stroke-width="1.500"/><path d="M10 14l8-8" stroke="#85837d" stroke-width="3.500"/></svg></button>
    <button aria-label="Angle"><svg class="size-6" viewBox="0 0 24 24"><path d="M22 3L3 11.500 22 20" fill="none" stroke="#85837d" stroke-width="3.500"/><path d="M13 7c2 3 2 6 0 9" fill="none" stroke="#85837d" stroke-width="2.500"/></svg></button>
    <button aria-label="Snell's law"><svg class="size-6" viewBox="0 0 24 24"><path d="M1 1l9 9 3 13M5 0l9 10 4 13" fill="none" stroke="#aeaca6"/><path d="M0 12h24" stroke="#85837d" stroke-width="3.500"/></svg></button>
    <hr>
    <button aria-label="Toggle driving"><svg class="size-6" viewBox="0 0 24 24"><path d="M10 3h12v12H10z" fill="none" stroke="#85837d" stroke-width="4"/><path d="M2.500 10.500h12v11h-12z" fill="#c9c7c1" stroke="#85837d" stroke-width="4"/><path d="M2.500 10.500h12v11h-12z" fill="none" stroke="#9b9993" stroke-width="1.500"/></svg></button>
  </div>
</div>

<!-- row 4: sketcher tools -->
<div class="flex h-[34px] shrink-0 items-center border-y border-t-white border-b-[#6b6962] [&_svg]:shrink-0 [&>button]:w-[31px] [&>button]:pl-[3px]" role="toolbar" aria-label="Sketcher tools">
  <span class="mr-[3px] ml-[3px] h-[26px] w-1.5 border-x-2 border-l-white border-r-white shadow-[inset_-1px_0_#77756e,1px_0_#77756e]"></span>
  <button aria-label="Close shape"><svg class="size-6" viewBox="0 0 24 24"><path d="M7 3C-1 8-1 16 7 21M21 3v18" fill="none" stroke="#a3a19b" stroke-width="1.600"/><path d="M11 8l4-3v2h4v2h-4v2zM11 16l4-3v2h4v2h-4v2z" fill="#85837d"/><use href="#dot" x="5" y="0" width="5" height="5"/><use href="#dot" x="5" y="18" width="5" height="5"/><use href="#dot" x="18" y="0" width="5" height="5"/><use href="#dot" x="18" y="18" width="5" height="5"/></svg></button>
  <button aria-label="Connect edges"><svg class="size-6" viewBox="0 0 24 24"><path d="M7 3C-1 8-1 16 7 21M20 3v12" fill="none" stroke="#b5b3ad" stroke-width="1.600"/><path d="M9 8l4-3v2h4v2h-4v2z" fill="#85837d"/><use href="#dot" x="5" y="0" width="5" height="5"/><use href="#dot" x="4" y="18" width="5" height="5"/><use href="#dot" x="18" y="0" width="5" height="5"/><use href="#dot" x="18" y="12" width="5" height="5"/></svg></button>
  <button aria-label="Select constraints"><svg class="size-6" viewBox="0 0 24 24"><path d="M4 3v18" stroke="#85837d" stroke-width="2" stroke-dasharray="4 1"/><path d="M9 7v10M12 10l6-8M16 10l6-8" stroke="#85837d" stroke-width="2"/><path d="M14 15l4 3.500-4 3.500M22 15l-4 3.500 4 3.500" fill="none" stroke="#85837d" stroke-width="2"/><use href="#dot" x="1" y="0" width="5" height="5"/><use href="#dot" x="1" y="18" width="5" height="5"/></svg></button>
  <button aria-label="Select elements"><svg class="size-6" viewBox="0 0 24 24"><path d="M4 3v18M21 3v16" stroke="#85837d" stroke-width="3"/><path d="M7 12l6-9M10 14l6-9M15 11v11" stroke="#85837d" stroke-width="1.800"/><use href="#dot" x="1" y="0" width="5" height="5"/><use href="#dot" x="1" y="18" width="5" height="5"/><use href="#dot" x="18" y="0" width="5" height="5"/><use href="#dot" x="18" y="17" width="5" height="5"/></svg></button>
  <button aria-label="Internal geometry"><svg class="size-6" viewBox="0 0 24 24"><ellipse cx="12" cy="12" rx="12" ry="6" fill="#c6c3bc" stroke="#a3a19b" transform="rotate(-45 12 12)"/><path d="M3 19L20 5M8 6l8 12" stroke="#7b7973" stroke-width="3.500"/></svg></button>
  <button aria-label="Symmetry"><svg class="size-6" viewBox="0 0 24 24"><path d="M5 2C-1 8-1 16 5 22M12 7v10" fill="none" stroke="#85837d" stroke-width="2"/><path d="M18 2c6 6 6 14 0 20" fill="none" stroke="#b5b3ad" stroke-width="1.800"/><use href="#dot" x="3" y="0" width="5" height="5"/><use href="#dot" x="3" y="18" width="5" height="5"/><use href="#dot" x="15" y="0" width="5" height="5"/><use href="#dot" x="15" y="18" width="5" height="5"/><use href="#dot" x="10" y="5" width="4" height="4"/><use href="#dot" x="10" y="14" width="4" height="4"/></svg></button>
  <div class="flex w-[43px] items-center pl-0.5"><button aria-label="Clone"><svg class="size-6" viewBox="0 0 24 24"><path d="M1 1.500h8M1 4.500h8" stroke="#85837d" stroke-width="2"/><path d="M14 6c-7 4-7 12 0 16" fill="none" stroke="#85837d" stroke-width="2.200"/><path d="M23 6c-7 4-7 12 0 16" fill="none" stroke="#bab8b2" stroke-width="1.500"/><use href="#dot" x="11" y="4" width="4" height="4"/><use href="#dot" x="20" y="4" width="4" height="4"/><use href="#dot" x="11" y="19" width="4" height="4"/><use href="#dot" x="20" y="19" width="4" height="4"/></svg></button><button class="ml-1.5" aria-label="Clone list"><svg class="h-1.5 w-[11px]"><use href="#arrow"/></svg></button></div>
  <button aria-label="Rectangular array"><svg class="size-6" viewBox="0 0 24 24"><path d="M3 14v8" stroke="#7b7973" stroke-width="2"/><path d="M9 10v8M15 7v8M21 3v8" stroke="#b7b5af" stroke-dasharray="2 1"/><use href="#dot" x="0" y="11" width="5" height="5"/><use href="#dot" x="0" y="19" width="5" height="5"/><use href="#dot" x="7" y="7" width="5" height="5"/><use href="#dot" x="7" y="15" width="5" height="5"/><use href="#dot" x="13" y="4" width="5" height="5"/><use href="#dot" x="13" y="12" width="5" height="5"/><use href="#dot" x="19" y="0" width="5" height="5"/><use href="#dot" x="19" y="8" width="5" height="5"/></svg></button>
</div>

<main class="flex min-h-0 flex-1">
  <aside class="flex w-[265px] shrink-0 flex-col border-r border-white" aria-label="Combo View">
    <div class="flex h-5 shrink-0 items-center justify-between border-y border-t-white border-b-[#6b6962] pr-1 pb-px pl-0.5">
      <h2>Combo View</h2>
      <div class="flex gap-[7px]">
        <button aria-label="Float"><svg class="size-2" viewBox="0 0 8 8"><path d="M2.500 1.500h5v3h-5zM.5 4.500h5v3h-5z" fill="#d4d0c8" stroke="#000"/><path d="M2 .5h6M0 3.500h6" stroke="#000"/></svg></button>
        <button aria-label="Close panel"><svg class="size-2" viewBox="0 0 8 8"><path d="M.5.5l7 7M7.500.5l-7 7" stroke="#000" stroke-width="1.600"/></svg></button>
      </div>
    </div>
    <div class="flex h-[22px] shrink-0 items-end border-b border-white pl-0.5" role="tablist">
      <button role="tab" class="h-[19px] w-[60px] rounded-tl-xs border-t border-l border-white pr-1 leading-[18px]">Model</button>
      <button role="tab" aria-selected="true" class="-mb-px h-[22px] w-[58px] rounded-tl-xs border-t border-r-2 border-l border-t-white border-r-black border-l-white bg-[#d4d0c8] pr-0.5 pb-px leading-5">Tasks</button>
    </div>
    <div class="mb-px flex min-h-0 flex-1 border-r-2 border-b-2 border-l-2 border-r-black border-b-black border-l-white">
      <div class="mt-px mr-px flex-1 border-2 border-t-[#222] border-r-white border-b-white border-l-[#222] bg-linear-to-b from-[#e9e9e6] from-0% via-[#6a6963] via-30% to-[#6a6963]"></div>
    </div>
  </aside>

  <section class="ml-[3px] flex min-w-0 flex-1 flex-col border-l-2 border-[#1c1c1c]" aria-label="3D view">
    <div class="min-h-0 flex-1 bg-linear-to-b from-[#333366] to-[#9696a9]">
      <svg class="size-full" viewBox="270 172 1650 826">
        <defs>
          <linearGradient id="topA" gradientUnits="userSpaceOnUse" x1="830" y1="78" x2="381" y2="850">
            <stop offset="0" stop-color="#222"/><stop offset=".02" stop-color="#555"/><stop offset=".054" stop-color="#757575"/><stop offset=".1" stop-color="#7d7d7d"/><stop offset=".32" stop-color="#7b7b7b"/><stop offset=".39" stop-color="#777"/><stop offset=".4" stop-color="#737373"/><stop offset=".455" stop-color="#727272"/><stop offset=".46" stop-color="#6d6d6d"/><stop offset=".52" stop-color="#6c6c6c"/><stop offset=".525" stop-color="#666"/><stop offset=".58" stop-color="#646464"/><stop offset=".585" stop-color="#5e5e5e"/><stop offset=".645" stop-color="#5c5c5c"/><stop offset=".65" stop-color="#555"/><stop offset=".703" stop-color="#535353"/><stop offset=".708" stop-color="#4b4b4b"/><stop offset=".76" stop-color="#494949"/><stop offset=".765" stop-color="#3f3f3f"/><stop offset=".82" stop-color="#3c3c3c"/><stop offset=".868" stop-color="#5a5a5a"/><stop offset=".897" stop-color="#737373"/><stop offset=".925" stop-color="#7a7a7a"/><stop offset=".964" stop-color="#646464"/><stop offset=".99" stop-color="#3a3a3a"/><stop offset="1" stop-color="#222"/>
          </linearGradient>
          <linearGradient id="sideA" gradientUnits="userSpaceOnUse" x1="1342" y1="472" x2="1286" y2="520">
            <stop offset="0" stop-color="#1c1c1c"/><stop offset=".12" stop-color="#484848"/><stop offset=".3" stop-color="#7c7c7c"/><stop offset=".5" stop-color="#989898"/><stop offset=".75" stop-color="#a8a8a8"/><stop offset="1" stop-color="#b1b1b1"/>
          </linearGradient>
          <linearGradient id="topB" gradientUnits="userSpaceOnUse" x1="550" y1="52" x2="190" y2="671">
            <stop offset="0" stop-color="#222"/><stop offset=".025" stop-color="#555"/><stop offset=".065" stop-color="#787878"/><stop offset=".12" stop-color="#7d7d7d"/><stop offset=".32" stop-color="#7a7a7a"/><stop offset=".41" stop-color="#757575"/><stop offset=".49" stop-color="#6e6e6e"/><stop offset=".495" stop-color="#6a6a6a"/><stop offset=".56" stop-color="#686868"/><stop offset=".565" stop-color="#646464"/><stop offset=".63" stop-color="#626262"/><stop offset=".7" stop-color="#5c5c5c"/><stop offset=".73" stop-color="#5c5c5c"/><stop offset=".77" stop-color="#727272"/><stop offset=".81" stop-color="#727272"/><stop offset=".85" stop-color="#505050"/><stop offset=".87" stop-color="#282828"/><stop offset=".885" stop-color="#404040"/><stop offset=".91" stop-color="#6a6a6a"/><stop offset=".94" stop-color="#797979"/><stop offset=".968" stop-color="#606060"/><stop offset="1" stop-color="#2a2a2a"/>
          </linearGradient>
          <linearGradient id="sideB" gradientUnits="userSpaceOnUse" x1="1020" y1="425" x2="940" y2="492">
            <stop offset="0" stop-color="#222"/><stop offset=".12" stop-color="#484848"/><stop offset=".3" stop-color="#767676"/><stop offset=".5" stop-color="#969696"/><stop offset=".75" stop-color="#a6a6a6"/><stop offset="1" stop-color="#b1b1b1"/>
          </linearGradient>
          <linearGradient id="lowB" gradientUnits="userSpaceOnUse" x1="578" y1="973" x2="619" y2="937">
            <stop offset="0" stop-color="#303030"/><stop offset=".3" stop-color="#707070"/><stop offset=".6" stop-color="#999"/><stop offset="1" stop-color="#b1b1b1"/>
          </linearGradient>
          <linearGradient id="botB" gradientUnits="userSpaceOnUse" x1="806" y1="1036" x2="782" y2="1012">
            <stop offset="0" stop-color="#222"/><stop offset=".5" stop-color="#666"/><stop offset="1" stop-color="#b1b1b1"/>
          </linearGradient>
          <radialGradient id="knob"><stop offset="0" stop-color="#dcdcdc"/><stop offset=".6" stop-color="#cfcfcf"/><stop offset="1" stop-color="#b4b4b4" stop-opacity="0"/></radialGradient>
          <filter id="soft" x="-10%" y="-10%" width="120%" height="120%"><feGaussianBlur stdDeviation="5"/></filter>
        </defs>

        <!-- upper button -->
        <g transform="translate(1030 290) scale(.33333)">
          <path d="M935 285L1213 447 1118 545 915 303z" fill="#777"/>
          <path d="M1213 447L1250 491 1158 590 1118 545z" fill="#b1b1b1"/>
          <path d="M92 612L455 825 715 1126 700 1122 350 915z" fill="#2a2a2a"/>
          <path d="M100 425C250 350 340 270 410 135C440 70 490 40 530 45L550 52 830 215Q850 225 870 250L860 330C780 480 650 610 500 680L470 835 455 825 100 622Q85 600 92 575Q106 540 97 510L80 490Q65 450 100 425z" fill="url(#topB)" stroke="#3a3a3a" stroke-width="4"/>
          <path d="M462 690L520 670C680 600 800 460 835 300L868 250 1165 600Q1185 640 1165 680L1142 718 862 970 735 1110Q722 1130 705 1122L458 828z" fill="#b1b1b1"/>
          <path d="M868 248L1165 600Q1182 640 1165 680L1142 718 1085 690 860 420 845 330z" fill="url(#sideB)"/>
          <path d="M456 826L702 1121Q722 1130 735 1105L745 1055 520 800z" fill="url(#lowB)"/>
          <path d="M735 1060L850 950 862 970 735 1110z" fill="url(#botB)"/>
          <path d="M455 690L520 690 590 762 520 750 455 735z" fill="#acacac"/>
          <path d="M442 710l10 22" stroke="#ddd" stroke-width="3"/>
          <path d="M442 700Q480 720 520 745" fill="none" stroke="#707070" stroke-width="12" filter="url(#soft)"/>
          <g fill="none" stroke-linecap="round" filter="url(#soft)">
            <path d="M832 246C858 420 700 590 510 665Q485 675 464 676" stroke="#a0a0a0" stroke-width="48"/>
            <path d="M838 270C854 420 702 592 510 667Q485 677 466 678" stroke="#d4d4d4" stroke-width="28"/>
          </g>
          <path d="M480 742L565 753 560 785 525 822 470 825z" fill="#cacaca"/>
          <path d="M565 753L596 766 560 790z" fill="#bcbcbc"/>
          <ellipse cx="496" cy="785" rx="56" ry="54" fill="url(#knob)"/>
          <path d="M1088 690L1157 732 915 985 845 945z" fill="#787878"/>
          <path d="M1157 732L1194 776 951 1030 915 985z" fill="#b1b1b1"/>
          <path d="M845 945L915 985 951 1030 862 972z" fill="#2a2a2a"/>
        </g>

        <!-- lower button -->
        <g transform="translate(720 500) scale(.33333)">
          <path d="M520 888L595 977 875 1140 920 1160 700 900z" fill="#262626"/>
          <path d="M595 977L875 1140 827 1188 549 1028z" fill="#787878"/>
          <path d="M549 1028L827 1188 863 1234 588 1072z" fill="#2a2a2a"/>
          <path d="M827 1188L875 1140 912 1187 863 1234z" fill="#b1b1b1"/>
          <path d="M130 532C260 535 420 480 540 385C640 300 690 200 742 105Q765 72 800 70Q815 70 830 78L1165 275 1180 340C1060 600 800 760 500 800L445 890 430 888 110 703Q55 660 57 605Q65 540 130 532z" fill="url(#topA)" stroke="#3a3a3a" stroke-width="4"/>
          <path d="M430 888C560 885 650 910 700 955L875 1140 912 1187Q950 1196 985 1187L1437 752 1190 295 1152 312C1080 500 940 640 780 715C680 765 600 775 500 785z" fill="#444"/>
          <path d="M440 882C570 877 660 900 722 950L890 1130 925 1190Q950 1194 985 1187L1437 752 1190 295 1152 312C1080 500 940 640 780 715C680 765 600 775 500 785z" fill="#686868"/>
          <path d="M450 872C580 865 690 890 755 945L910 1125 950 1192 985 1187 1437 752 1190 295 1152 312C1080 500 940 640 780 715C680 765 600 775 500 785z" fill="#848484"/>
          <path d="M455 858C590 850 720 880 790 945L940 1120 985 1187 1437 752 1190 295 1152 312C1080 500 940 640 780 715C680 765 600 775 500 785z" fill="#969696"/>
          <path d="M460 842C600 835 740 865 825 935L970 1110 1018 1172 1437 752 1190 295 1152 312C1080 500 940 640 780 715C680 765 600 775 500 785z" fill="#a3a3a3"/>
          <path d="M480 822C620 815 770 855 860 915L1005 1090 1042 1160 1437 752 1190 295 1152 312C1080 500 940 640 780 715C680 765 600 775 500 785z" fill="#ababab"/>
          <path d="M520 795C680 800 800 850 900 905L1040 1060 1070 1135 1437 752 1480 712 1190 295 1152 312C1080 500 940 640 780 715C700 755 620 775 520 795z" fill="#b1b1b1"/>
          <path d="M1018 1172Q1060 1150 1082 1123L1040 1080z" fill="#b1b1b1"/>
          <path d="M735 970Q800 975 850 925Q870 905 860 880L760 860Q750 900 685 930z" fill="#777" opacity=".18"/>
          <path d="M1180 285L1490 648Q1500 690 1480 712L1437 752 1390 700 1175 350z" fill="url(#sideA)"/>
          <g fill="none" stroke-linecap="round" filter="url(#soft)">
            <path d="M1150 314C1080 500 940 640 780 715C680 765 600 778 500 785Q455 800 448 850" stroke="#a0a0a0" stroke-width="64"/>
            <path d="M1150 318C1084 505 940 645 780 722C680 770 600 782 500 790Q465 805 455 838" stroke="#d2d2d2" stroke-width="38"/>
          </g>
          <ellipse cx="478" cy="805" rx="40" ry="48" fill="url(#knob)" transform="rotate(35 478 805)"/>
          <path d="M1383 722L1450 762 1112 1118 1043 1078z" fill="#787878"/>
          <path d="M1450 762L1491 807 1148 1163 1112 1118z" fill="#b1b1b1"/>
          <path d="M1043 1078L1112 1118 1148 1163 1080 1123z" fill="#2a2a2a"/>
        </g>

        <!-- axis cross -->
        <g stroke-width="1.500">
          <path d="M1879 957L1898 937" stroke="#8c2830"/><path d="M1898 937l-2 6-3 3-3-3 2-4z" fill="#8c2020"/>
          <path d="M1879 957l-9-5" stroke="#208828"/><path d="M1868 950l5 0 5 5-6 0-4-2z" fill="#208820"/>
          <path d="M1879 957L1861 936" stroke="#202890"/><path d="M1861 935l8 5-2 5-3 1z" fill="#202088"/>
        </g>
        <g class="font-['DejaVu_Sans',sans-serif] text-[9px]"><text x="1899" y="938">X</text><text x="1862" y="936">Z</text><text x="1869" y="951">Y</text></g>
      </svg>
    </div>
    <div class="flex h-6 shrink-0 items-start border-t-2 border-black pl-[3px]" role="tablist">
      <div class="flex h-[19px] w-[202px] items-center border-b border-l border-b-black border-l-white pl-2">
        <svg class="mr-1.5 size-3.5 shrink-0"><use href="#fc"/></svg>
        <button role="tab" class="whitespace-nowrap">n64_z+rl-button_V2 : 1</button>
        <button aria-label="Close tab" class="ml-1.5"><svg class="size-3.5" viewBox="0 0 14 14"><rect x=".5" y=".5" width="13" height="13" rx="2" fill="#b4b2ac" stroke="#9a9892"/><path d="M4 4l6 6M10 4l-6 6" stroke="#fff" stroke-width="2"/></svg></button>
      </div>
      <div class="-mt-0.5 flex h-[23px] w-[159px] items-center border-r-2 border-b border-l border-black border-l-white bg-[#d4d0c8] pt-0.5 pl-[11px]">
        <svg class="mr-1.5 size-3.5 shrink-0"><use href="#fc"/></svg>
        <button role="tab" aria-selected="true" class="whitespace-nowrap">Unnamed1 : 1*</button>
        <button aria-label="Close tab" class="ml-2"><svg class="size-3.5" viewBox="0 0 14 14"><rect x=".5" y=".5" width="13" height="13" rx="2" fill="#e8805c" stroke="#cc3c20"/><path d="M4 4l6 6M10 4l-6 6" stroke="#fff" stroke-width="2"/></svg></button>
      </div>
    </div>
  </section>
</main>

<footer class="flex h-[27px] shrink-0 items-center justify-between bg-linear-to-b from-[#d4d0c8] from-50% to-[#a5a29b] pb-0.5 pl-1.5">
  <span>Preselected: Unnamed.N64_Z_RL_Buttons.Main (10.603682,-11.789583,3.364058)</span>
  <span class="h-[23px] w-[123px] border-t border-l border-[#6b6962] bg-[#d4d0c8] pl-px leading-[22px] whitespace-nowrap">69.35 x 34.72 mm</span>
</footer>
</body>
</html>
